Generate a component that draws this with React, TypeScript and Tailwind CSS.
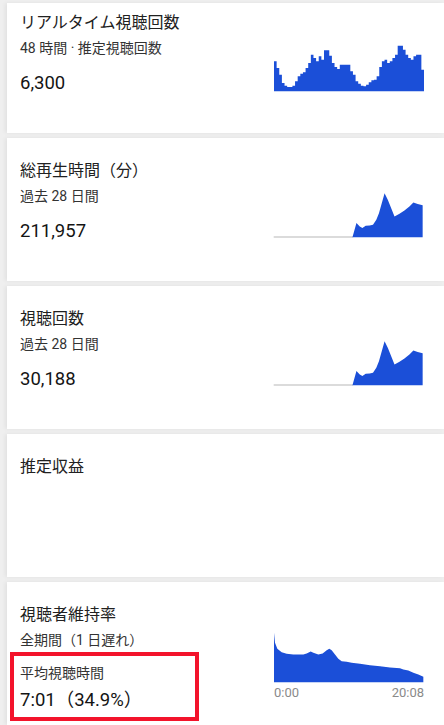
import React from 'react';

const BLUE = '#1b4fd8';

// realtime histogram, heights read in 3x zoom coords (baseline 185)
const realtime = [
    95, 115, 135, 160, 168, 172, 172, 168, 155, 140, 132, 128, 115, 100, 75, 85, 95, 80, 90, 62, 62, 78, 100, 112, 118,
    105, 105, 105, 105, 125, 135, 155, 162, 168, 170, 165, 158, 152, 150, 140, 112, 95, 90, 100, 95, 85, 75, 48, 48, 60,
    75, 85, 90, 80, 75, 75, 120,
];

function stepPath(vals: number[], x0: number, w: number, base: number) {
    const step = w / vals.length;
    let d = `M${x0} ${base}`;
    vals.forEach((v, i) => {
        d += ` L${x0 + i * step} ${v} L${x0 + (i + 1) * step} ${v}`;
    });
    return d + ` L${x0 + w} ${base} Z`;
}

const growthArea =
    'M278 173 L290 130 L300 140 L308 145 L318 138 L330 137 L340 135 L350 120 L358 100 L375 40 L385 60 L395 85 L405 110 L420 102 L435 92 L450 80 L462 68 L475 72 L490 76 L490 173 Z';

const retentionArea =
    'M42 30 L45 60 L52 78 L65 88 L80 93 L100 95 L130 95 L140 92 L152 86 L160 90 L175 95 L188 92 L200 82 L208 78 L215 82 L225 95 L235 108 L245 115 L260 117 L275 120 L300 123 L330 127 L360 130 L390 134 L420 136 L430 140 L445 143 L460 150 L475 155 L490 162 L490 178 L42 178 Z';

const font = { fontFamily: 'Roboto, "Noto Sans CJK JP", sans-serif' };

function RealtimeChart() {
    return (
        <svg width="150" height="49" viewBox="42 40 450 147" className="block">
            <path d={stepPath(realtime, 42, 450, 185)} fill={BLUE} />
        </svg>
    );
}

function GrowthChart() {
    return (
        <svg width="151" height="48" viewBox="40 30 452 145" className="block">
            <line x1="40" y1="172" x2="280" y2="172" stroke="#cfcfcf" strokeWidth="4" />
            <path d={growthArea} fill={BLUE} />
        </svg>
    );
}

interface MetricCardProps {
    title: string;
    sub: string;
    value: string;
    chart: React.ReactNode;
    first?: boolean;
}

function MetricCard({ title, sub, value, chart, first }: MetricCardProps) {
    return (
        <div
            className={`flex justify-between bg-white pl-[13px] pr-[20px] shadow-[-2px_0_4px_rgba(0,0,0,0.06)] ${
                first ? 'h-[130px] pt-[9px]' : 'h-[143px] pt-[22px]'
            }`}
        >
            <div className="flex flex-col">
                <p className="text-[16px] leading-[22px] text-[#212121]">{title}</p>
                <p className="mt-[5px] text-[14px] leading-[18px] text-[#333]">{sub}</p>
                <p className="mt-[14px] text-[18.5px] leading-[24px] text-[#141414]">{value}</p>
            </div>
            <div className={first ? 'pt-[31px]' : 'pt-[30px]'}>{chart}</div>
        </div>
    );
}

export default function App() {
    return (
        <div className="h-[725px] w-[444px] overflow-hidden bg-[#efefef] pl-[7px]" style={font}>
            <div className="h-[3px]" />
            <div className="flex flex-col gap-[5px]">
                <MetricCard first title="リアルタイム視聴回数" sub="48 時間 · 推定視聴回数" value="6,300" chart={<RealtimeChart />} />
                <MetricCard title="総再生時間（分）" sub="過去 28 日間" value="211,957" chart={<GrowthChart />} />
                <MetricCard title="視聴回数" sub="過去 28 日間" value="30,188" chart={<GrowthChart />} />

                <div className="h-[143px] bg-white pl-[13px] pt-[22px] shadow-[-2px_0_4px_rgba(0,0,0,0.06)]">
                    <p className="text-[16px] leading-[22px] text-[#212121]">推定収益</p>
                </div>

                <div className="flex h-[143px] justify-between bg-white pl-[13px] pr-[20px] pt-[22px] shadow-[-2px_0_4px_rgba(0,0,0,0.06)]">
                    <div className="flex flex-col">
                        <p className="text-[16px] leading-[22px] text-[#212121]">視聴者維持率</p>
                        <p className="mt-[5px] text-[14px] leading-[18px] text-[#333]">全期間（1 日遅れ）</p>
                        <div className="-ml-[10px] mt-[3px] h-[69px] w-[189px] border-[4px] border-[#f3132b] pl-[6px] pt-[8px]">
                            <p className="text-[14px] leading-[18px] text-[#333]">平均視聴時間</p>
                            <p className="mt-[6px] text-[18.5px] leading-[24px] text-[#141414]">7:01（34.9%）</p>
                        </div>
                    </div>
                    <div className="flex w-[150px] flex-col pt-[27px]">
                        <svg width="150" height="52" viewBox="42 25 450 155" className="block">
                            <path d={retentionArea} fill={BLUE} />
                        </svg>
                        <div className="mt-[2px] flex justify-between text-[13px] leading-[16px] text-[#8a8a8a]">
                            <span>0:00</span>
                            <span>20:08</span>
                        </div>
                    </div>
                </div>
            </div>
        </div>
    );
}
